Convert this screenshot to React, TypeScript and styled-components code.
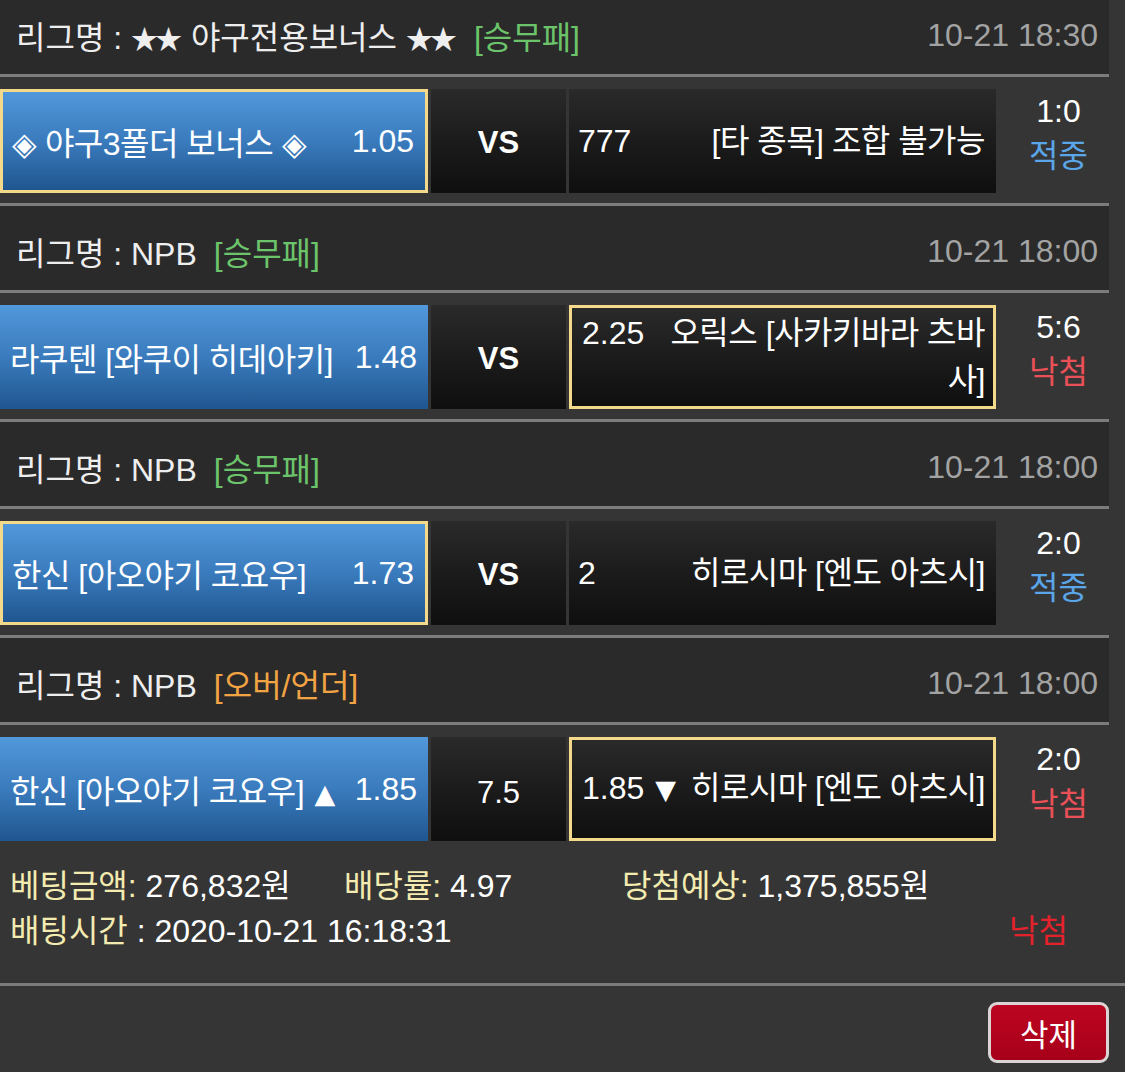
import React from "react";
import styled, { createGlobalStyle, css } from "styled-components";

const GlobalStyle = createGlobalStyle`
  html, body {
    margin: 0;
    padding: 0;
    background: #353535;
  }
  * { box-sizing: border-box; }
`;

const FONT = `"Liberation Sans", "Noto Sans CJK KR", sans-serif`;

const Page = styled.div`
  width: 1125px;
  height: 1072px;
  overflow: hidden;
  background: #353535;
  color: #ffffff;
  font-family: ${FONT};
  font-size: 32px;
`;

const List = styled.div`
  width: 1109px;
  margin-top: -10px;
`;

const Game = styled.section`
  & + & {
    border-top: 3px solid #7c7c7c;
  }
`;

const LeagueHeader = styled.div`
  height: 87px;
  background: #2a2a2a;
  border-bottom: 3px solid #7c7c7c;
  display: flex;
  align-items: center;
  padding: 6px 11px 0 16px;
  white-space: nowrap;
`;

const LeagueName = styled.span`
  color: #eeeeee;
`;

const Stars = styled.span`
  font-size: 27px;
  letter-spacing: -3px;
  margin-right: 3px;
`;

const BetType = styled.span<{ $color: string }>`
  color: ${(p) => p.$color};
  margin-left: 17px;
`;

const GameTime = styled.span`
  margin-left: auto;
  color: #a3a3a3;
`;

const MatchRow = styled.div`
  display: flex;
  gap: 3px;
  padding: 12px 0 10px;
`;

const selectedBorder = css`
  border: 3px solid #f5d98b;
`;

const HomeBox = styled.div<{ $selected: boolean }>`
  width: 428px;
  height: 104px;
  flex: none;
  background: linear-gradient(to bottom, #5198da 0%, #3a7bbd 50%, #1f5690 100%);
  display: flex;
  align-items: center;
  justify-content: space-between;
  padding: 0 11px 0 10px;
  white-space: nowrap;
  ${(p) => (p.$selected ? selectedBorder : "")}
  ${(p) => (p.$selected ? "padding: 0 11px 0 9px;" : "")}
`;

const TeamName = styled.span`
  letter-spacing: -0.5px;
`;

const Arrow = styled.span`
  font-family: "DejaVu Sans", sans-serif;
  font-size: 27px;
  margin-left: 2px;
`;

const DarkBox = styled.div`
  height: 104px;
  flex: none;
  background: linear-gradient(to bottom, #2a2a2a 0%, #1a1a1a 55%, #0f0f0f 100%);
`;

const MidBox = styled(DarkBox)<{ $bold: boolean }>`
  width: 135px;
  display: flex;
  align-items: center;
  justify-content: center;
  font-weight: ${(p) => (p.$bold ? 700 : 400)};
  font-size: 31px;
  padding-top: ${(p) => (p.$bold ? "4px" : "8px")};
`;

const AwayBox = styled(DarkBox)<{ $selected: boolean }>`
  width: 427px;
  display: flex;
  align-items: center;
  padding: 0 11px 0 9px;
  line-height: 47px;
  ${(p) => (p.$selected ? selectedBorder : "")}
  ${(p) => (p.$selected ? "padding: 0 8px 0 10px;" : "")}
`;

const AwayText = styled.div`
  width: 100%;
  text-align: right;
`;

const AwayOdds = styled.span`
  float: left;
  margin-right: 6px;
`;

const ScoreCol = styled.div`
  flex: 1;
  align-self: flex-start;
  display: flex;
  flex-direction: column;
  align-items: center;
  padding-left: 9px;
  line-height: 45px;
`;

const Score = styled.span`
  color: #ffffff;
`;

const Result = styled.span<{ $win: boolean }>`
  color: ${(p) => (p.$win ? "#5aa6e8" : "#ea5058")};
`;

const Summary = styled.div`
  width: 1109px;
  padding: 13px 41px 29px 10px;
  line-height: 45px;
`;

const SummaryLine = styled.div`
  display: grid;
  grid-template-columns: 334px 278px 1fr;
  white-space: nowrap;
`;

const SummaryLine2 = styled.div`
  display: flex;
  justify-content: space-between;
  white-space: nowrap;
`;

const Label = styled.span`
  color: #f3ebb0;
`;

const FinalResult = styled.span`
  color: #e4222c;
`;

const Divider = styled.div`
  width: 1125px;
  height: 3px;
  background: #7c7c7c;
`;

const Footer = styled.div`
  display: flex;
  justify-content: flex-end;
  padding: 16px 16px 0 0;
`;

const DeleteButton = styled.button`
  width: 121px;
  height: 61px;
  border: 3px solid #dcd4d4;
  border-radius: 9px;
  background: linear-gradient(to bottom, #bd0521, #a7001a);
  color: #ffffff;
  font-family: ${FONT};
  font-size: 31px;
  padding: 0;
  display: flex;
  align-items: center;
  justify-content: center;
`;

type GameData = {
  league: React.ReactNode;
  type: string;
  typeColor: string;
  time: string;
  homeName: React.ReactNode;
  homeOdds: string;
  mid: string;
  awayOdds: React.ReactNode;
  awayName: string;
  pick: "home" | "away";
  score: string;
  win: boolean;
};

const GREEN = "#6cc46a";
const ORANGE = "#f2a444";

const games: GameData[] = [
  {
    league: (
      <>
        리그명 : <Stars>★★</Stars> 야구전용보너스 <Stars>★★</Stars>
      </>
    ),
    type: "[승무패]",
    typeColor: GREEN,
    time: "10-21 18:30",
    homeName: "◈ 야구3폴더 보너스 ◈",
    homeOdds: "1.05",
    mid: "VS",
    awayOdds: "777",
    awayName: "[타 종목] 조합 불가능",
    pick: "home",
    score: "1:0",
    win: true,
  },
  {
    league: "리그명 : NPB",
    type: "[승무패]",
    typeColor: GREEN,
    time: "10-21 18:00",
    homeName: "라쿠텐 [와쿠이 히데아키]",
    homeOdds: "1.48",
    mid: "VS",
    awayOdds: "2.25",
    awayName: "오릭스 [사카키바라 츠바사]",
    pick: "away",
    score: "5:6",
    win: false,
  },
  {
    league: "리그명 : NPB",
    type: "[승무패]",
    typeColor: GREEN,
    time: "10-21 18:00",
    homeName: "한신 [아오야기 코요우]",
    homeOdds: "1.73",
    mid: "VS",
    awayOdds: "2",
    awayName: "히로시마 [엔도 아츠시]",
    pick: "home",
    score: "2:0",
    win: true,
  },
  {
    league: "리그명 : NPB",
    type: "[오버/언더]",
    typeColor: ORANGE,
    time: "10-21 18:00",
    homeName: (
      <>
        한신 [아오야기 코요우] <Arrow>▲</Arrow>
      </>
    ),
    homeOdds: "1.85",
    mid: "7.5",
    awayOdds: (
      <>
        1.85 <Arrow>▼</Arrow>
      </>
    ),
    awayName: "히로시마 [엔도 아츠시]",
    pick: "away",
    score: "2:0",
    win: false,
  },
];

export default function App() {
  return (
    <Page>
      <GlobalStyle />
      <List>
        {games.map((g, i) => (
          <Game key={i}>
            <LeagueHeader>
              <LeagueName>{g.league}</LeagueName>
              <BetType $color={g.typeColor}>{g.type}</BetType>
              <GameTime>{g.time}</GameTime>
            </LeagueHeader>
            <MatchRow>
              <HomeBox $selected={g.pick === "home"}>
                <TeamName>{g.homeName}</TeamName>
                <span>{g.homeOdds}</span>
              </HomeBox>
              <MidBox $bold={g.mid === "VS"}>{g.mid}</MidBox>
              <AwayBox $selected={g.pick === "away"}>
                <AwayText>
                  <AwayOdds>{g.awayOdds}</AwayOdds>
                  <TeamName>{g.awayName}</TeamName>
                </AwayText>
              </AwayBox>
              <ScoreCol>
                <Score>{g.score}</Score>
                <Result $win={g.win}>{g.win ? "적중" : "낙첨"}</Result>
              </ScoreCol>
            </MatchRow>
          </Game>
        ))}
      </List>
      <Summary>
        <SummaryLine>
          <span>
            <Label>베팅금액:</Label> 276,832원
          </span>
          <span>
            <Label>배당률:</Label> 4.97
          </span>
          <span>
            <Label>당첨예상:</Label> 1,375,855원
          </span>
        </SummaryLine>
        <SummaryLine2>
          <span>
            <Label>배팅시간</Label> : 2020-10-21 16:18:31
          </span>
          <FinalResult>낙첨</FinalResult>
        </SummaryLine2>
      </Summary>
      <Divider />
      <Footer>
        <DeleteButton>삭제</DeleteButton>
      </Footer>
    </Page>
  );
}
